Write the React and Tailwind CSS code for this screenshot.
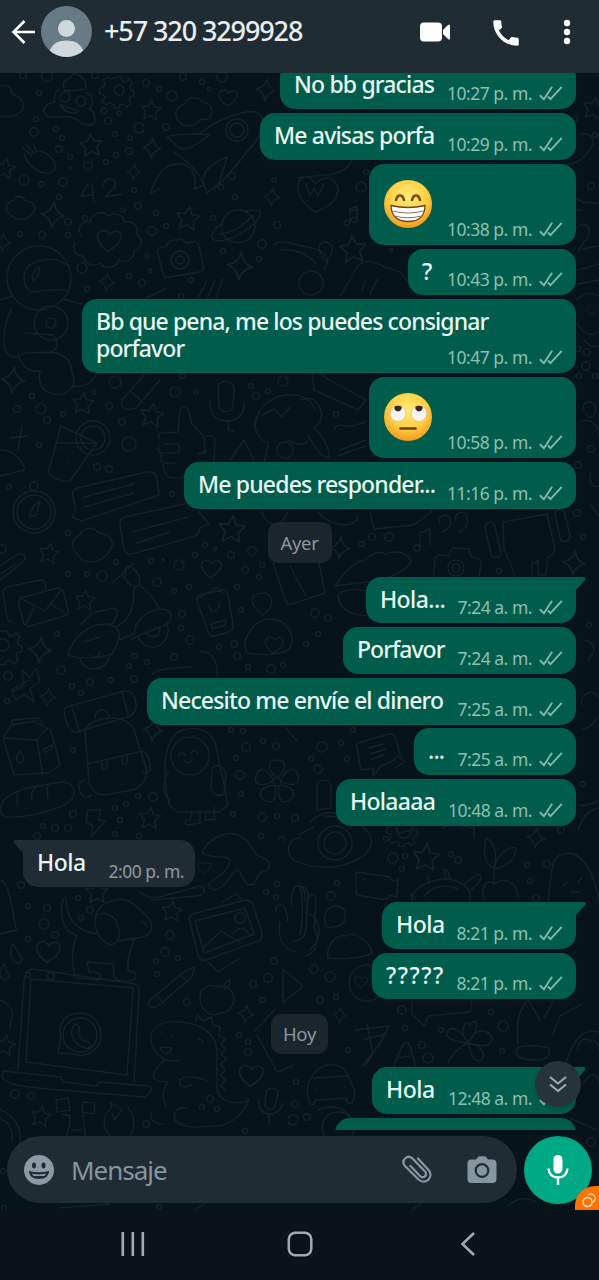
import { MdCall } from "react-icons/md";

const messages = [
  { text: "No bb gracias", time: "10:27 p. m.", box: "-mt-[11px] w-[296px] h-[47px]" },
  { text: "Me avisas porfa", time: "10:29 p. m.", box: "mt-1 w-[316px] h-[47px]" },
  { emoji: "grin", time: "10:38 p. m.", box: "mt-1 w-[207px] h-[81px]" },
  { text: "?", time: "10:43 p. m.", box: "mt-1 w-[168px] h-[46px]" },
  {
    text: "Bb que pena, me los puedes consignar porfavor",
    time: "10:47 p. m.",
    box: "mt-1 w-[494px] h-[74px]",
    spacing: "tracking-[-0.88px]",
    long: true,
  },
  { emoji: "eyes", time: "10:58 p. m.", box: "mt-1 w-[207px] h-[81px]" },
  { text: "Me puedes responder...", time: "11:16 p. m.", box: "mt-1 w-[392px] h-[47px]" },
  { day: "Ayer", box: "mt-[13px] w-[64px] h-[41px]" },
  { text: "Hola...", time: "7:24 a. m.", box: "mt-[14px] w-[210px] h-[46px]", spacing: "tracking-[-0.6px]", tail: true },
  { text: "Porfavor", time: "7:24 a. m.", box: "mt-1 w-[233px] h-[47px]", spacing: "tracking-[-0.95px]" },
  { text: "Necesito me envíe el dinero", time: "7:25 a. m.", box: "mt-1 w-[429px] h-[47px]" },
  { text: "...", time: "7:25 a. m.", box: "mt-[3px] w-[162px] h-[47px]" },
  { text: "Holaaaa", time: "10:48 a. m.", box: "mt-1 w-[240px] h-[47px]", spacing: "tracking-[-0.7px]" },
  {
    text: "Hola",
    time: "2:00 p. m.",
    box: "mt-[14px] w-[172px] h-[47px]",
    spacing: "tracking-[-0.5px]",
    incoming: true,
    tail: true,
  },
  { text: "Hola", time: "8:21 p. m.", box: "mt-[15px] w-[194px] h-[47px]", spacing: "tracking-[-0.5px]", tail: true },
  { text: "?????", time: "8:21 p. m.", box: "mt-1 w-[204px] h-[46px]", spacing: "tracking-[1.5px]" },
  { day: "Hoy", box: "mt-[15px] w-[57px] h-[40px]" },
  { text: "Hola", time: "12:48 a. m.", box: "mt-[13px] w-[204px] h-[47px]", spacing: "tracking-[-0.5px]", tail: true },
  { box: "mt-1 w-[241px] h-[47px]" },
];

// x, y, radius
const dots = [
  [23, 75, 4], [47, 76, 6.5], [95, 75, 4], [39, 93, 3], [146, 83, 4], [159, 89, 3], [183, 77, 4], [202, 82, 3],
  [209, 89, 2], [222, 77, 6], [172, 96, 6], [104, 111, 3.5], [119, 113, 2.5], [108, 121, 4], [139, 128, 6],
  [166, 127, 4], [36, 119, 3], [34, 132, 5], [56, 129, 3], [62, 138, 3], [59, 149, 4], [115, 134, 3],
  [130, 138, 2.5], [129, 151, 4], [116, 155, 3], [106, 162, 3], [70, 157, 3], [88, 166, 5], [70, 168, 1.5],
  [24, 180, 6], [41, 184, 3], [63, 182, 5], [134, 190, 3], [59, 197, 3], [232, 176, 4], [221, 187, 3],
  [235, 197, 3], [274, 180, 2.5], [85, 218, 3], [68, 222, 4], [20, 234, 3], [42, 235, 4], [68, 235, 3],
  [123, 210, 2.5], [138, 206, 4], [156, 213, 3], [166, 226, 3], [152, 231, 5], [213, 218, 3], [277, 225, 4],
  [262, 244, 5], [223, 251, 3], [259, 259, 3], [147, 256, 2.5], [150, 271, 2], [129, 276, 3], [142, 283, 4],
  [82, 268, 6], [87, 289, 3], [191, 280, 3], [181, 296, 3], [115, 382, 7], [32, 396, 3], [17, 409, 4],
  [41, 409, 6], [47, 420, 4], [63, 414, 3], [94, 392, 2.5], [109, 406, 4], [122, 422, 4], [175, 392, 6],
  [196, 392, 2.5], [182, 376, 3], [251, 386, 3], [256, 396, 4], [268, 391, 3], [283, 381, 6], [39, 445, 3],
  [97, 467, 4], [109, 469, 4], [9, 487, 3], [34, 486, 5], [172, 494, 3], [68, 533, 3], [2, 549, 5],
  [68, 574, 3], [87, 574, 3], [102, 576, 6], [116, 562, 3], [151, 561, 3], [163, 560, 1.5], [179, 565, 6],
  [195, 555, 3], [205, 545, 3], [215, 549, 2], [231, 555, 4], [252, 551, 5], [262, 565, 3], [259, 577, 3],
  [245, 570, 4], [157, 582, 5], [174, 591, 3], [189, 587, 3], [237, 587, 3], [182, 614, 4], [181, 628, 3],
  [190, 640, 5], [241, 610, 3], [219, 647, 3], [234, 644, 4], [237, 656, 4], [174, 657, 4], [147, 662, 3],
  [134, 656, 3], [129, 666, 3], [134, 679, 4], [111, 680, 3], [90, 682, 4], [72, 686, 3], [81, 693, 3],
  [61, 670, 5], [57, 634, 3], [8, 676, 5], [7, 701, 3], [248, 667, 3], [271, 669, 5], [283, 665, 3],
  [231, 730, 3], [243, 731, 3], [246, 747, 5], [236, 758, 3], [263, 741, 3], [276, 746, 4], [240, 775, 5],
  [241, 794, 3], [73, 750, 3], [138, 796, 3], [153, 797, 5], [115, 808, 3], [126, 804, 3], [120, 820, 3],
  [73, 814, 4], [43, 826, 3], [68, 828, 4], [233, 814, 3], [262, 817, 5], [277, 816, 3], [295, 818, 4],
  [37, 836, 4], [55, 828, 4], [115, 834, 3], [139, 836, 3], [261, 836, 3], [21, 885, 4], [28, 906, 3],
  [47, 908, 4], [44, 924, 6], [55, 935, 4], [28, 939, 3], [28, 975, 3], [51, 976, 4], [78, 898, 3],
  [90, 910, 4], [81, 918, 3], [170, 935, 5], [165, 952, 5], [156, 961, 3], [178, 958, 3], [157, 974, 3],
  [187, 1002, 4], [266, 892, 3], [277, 884, 3], [276, 897, 3], [274, 961, 4], [253, 984, 4], [268, 978, 5],
  [262, 1000, 3], [239, 1035, 3], [248, 1042, 3], [248, 1052, 4], [296, 1082, 3], [295, 1104, 4],
  [293, 1120, 6], [245, 1131, 3], [15, 1094, 5], [31, 1096, 4], [146, 1124, 4], [202, 1107, 3],
  [210, 1099, 4], [217, 1109, 3], [575, 119, 3], [595, 135, 3], [591, 186, 4], [366, 172, 3], [361, 187, 6],
  [391, 250, 2], [336, 414, 3], [579, 376, 3], [595, 376, 3], [591, 449, 4], [577, 513, 4], [578, 465, 4],
  [578, 349, 3], [587, 352, 4], [586, 366, 5], [372, 537, 4], [389, 537, 5], [362, 544, 3], [499, 571, 3],
  [583, 537, 3], [315, 613, 5], [328, 618, 4], [318, 634, 3], [306, 644, 3], [589, 625, 3], [322, 747, 6],
  [311, 759, 3], [318, 769, 5], [341, 743, 3], [347, 759, 3], [353, 730, 3], [386, 839, 3], [393, 858, 6],
  [405, 856, 3], [402, 869, 3], [451, 854, 3], [458, 860, 4], [527, 865, 3], [547, 864, 4], [530, 881, 3],
  [536, 898, 4], [337, 883, 3], [331, 896, 5], [314, 969, 5], [330, 977, 6], [320, 1000, 4], [336, 997, 3],
  [561, 830, 4], [583, 784, 3], [402, 1010, 5], [491, 1012, 3], [503, 1026, 6], [405, 1028, 3],
  [441, 1030, 3], [422, 1045, 4], [348, 1050, 3], [428, 1058, 6], [502, 1051, 3], [307, 1117, 4],
  [591, 1142, 5], [3, 1171, 3], [4, 1208, 3], [159, 1207, 3],
];

// x, y, scale, rotation
const stars = [
  [151, 110, 1, 5], [91, 145, 1.1, -5], [5, 168, 1, 10], [188, 218, 1.15, 8], [83, 403, 1.05, 5], [152, 415, 1.15, 8],
  [49, 553, 1, 10], [232, 529, 1.3, 5], [85, 600, 1, 5], [150, 818, 1.05, 5], [172, 911, 1, 5], [41, 1116, 1, 10],
  [97, 892, 1.1, 0], [5, 1045, 1, 10], [353, 249, 1.3, -5], [426, 857, 1.3, 5], [594, 108, 1.1, 10],
];

const sparkles = [
  [266, 90, 1.1], [152, 148, 1], [134, 172, 0.8], [272, 197, 0.9], [53, 215, 1.3], [240, 266, 1.4], [107, 282, 0.9],
  [13, 380, 1.3], [40, 650, 1.3], [48, 697, 0.9], [153, 730, 1.1], [246, 1014, 0.9], [574, 563, 1.2], [340, 548, 1.1],
  [536, 838, 1], [340, 1015, 0.8], [3, 242, 0.9],
];

const hearts = [
  [228, 98, 1], [109, 241, 1.3], [211, 569, 1.1], [274, 645, 1], [48, 952, 1.3], [251, 1076, 1.3], [204, 868, 0.7],
  [361, 982, 0.7], [592, 310, 0.6],
];

const doodles = [
  // clouds
  "M178 120c-6-8 1-15 7-16 2-8 14-8 17-2 8 1 12 7 9 13-2 5-7 5-10 4-5 8-17 10-23 1z",
  "M8 213c-4-7 1-12 5-12 2-6 10-6 12 0 9 0 12 7 8 12-4 6-14 11-25 0z",
  "M75 551c-6-9 1-15 5-16 2-8 15-9 18-2 11 0 18 9 12 17-7 13-27 18-35 1z",
  "M0 86c10-2 12 3 12 8 8 2 14 10 10 16-4 7-14 7-22 6",
  // poop
  "M64 88c-3-8 4-6 10-15 8 3 13 8 12 16M60 90c-4 0-7 6-5 12-8 1-14 7-10 12 6 8 22-2 32 6 6 5 18 8 18 0 0-6-2-10-6-11 6-6 4-14-2-16M64 90c6 2 14 0 20-1M60 105c4 6 12 11 19 6-3-2-12-3-19-6z",
  // mitten and rocket
  "M22 147l9 8M26 145l8 8M33 144l4 8M24 154c4 12 15 20 25 19 8-1 7-8 4-13-4-7-12-10-18-8",
  "M168 138c-3-3 12-4 42-4-8 8-20 15-28 15-6-2-8-7-14-11zM200 133c18-14 42-23 55-21 15 5 7 25-10 42-8 12-20 24-31 36M227 157c-12 5-24 12-24 24l4 12 12-10zM174 152c12 8 24 18 30 33l-10 4c5-12-5-27-16-25-16 0-22 14-28 30l10-6",
  // scalloped badge
  "M82 236c-7-7 1-16 8-14 1-9 13-12 18-6 7-5 16-1 16 6 9-2 16 5 12 12 8 4 6 15-2 17 1 8-9 13-15 9-3 9-15 9-19 3-8 5-16 0-16-7-8 1-13-7-9-13",
  // planet
  "M222 226c0-13 13-20 24-14 10 5 12 17 4 26-9 8-24 5-28-6M246 211c12-3 18 0 12 8-9 12-29 22-40 22-12-2-4-13 4-17M219 234c12-1 25-8 34-19",
  // cameras
  "M162 247c-5 1-5 3-4 8l5 18c1 4 3 5 7 4l29-5c4-1 5-4 4-8l-4-18c-1-4-4-5-7-4l-6 1-4-4-13 2-2 5z",
  "M440 555c-4 0-5 3-5 6l-2 18M440 555l9 1 3-8 17 1 2 8 6 1c4 0 4 4 4 6l-2 14",
  // astronaut
  "M12 309c-6 8-10 28-7 40 6 12 12 9 20 4M0 300l13-4M62 299l20 5M18 353c2 14 12 20 24 18M25 333l28 2c6 8 5 14-2 17l-26 1M42 353c22-3 30 8 30 20 5 8 0 18-10 21-16 2-25-8-22-22M72 386c14 2 22-6 24-12",
  "M28 290c-8-12-4-25 10-29 12-3 22-1 29 4M30 292c14-1 24-3 36-2M32 277c1-5 4-8 7-10 2 5-2 10-5 14z",
  // pencil, drink, thumb
  "M122 400l22-25M136 408l24-28M122 400c-4 7 6 12 14 8M130 391l14 12M146 298l20-9M198 298l9-17M207 298l8-17M216 298l7-19",
  "M61 426l36 17-27 38c-8 1-17-3-22-8zM56 443h40M61 450h1M72 452h1M68 462h1M80 448h1",
  "M160 439c-4-3 0-7 4-6l14-1 2-20c0-6 6-8 8-2l4 14 12 13 1 16M160 445c-4 3-1 8 3 8M162 455c-3 4 0 8 4 8M163 465c0 5 3 12 9 13 5 0 12 1 12-3M164 444h12c5 0 5 9 0 9h-11M166 463h10M206 436c5-1 9 0 9 7l-1 18M198 454l8-2",
  // microphones
  "M218 388c0-9 15-9 16 0l-1 18c-1 8-13 7-14 0zM210 402c0 12 6 19 17 19s18-7 17-19M229 421l-1 8 6 3",
  "M266 1094c0-8 12-8 12 0l-3 12c-2 5-10 4-10-2zM259 1100c-1 8 3 14 10 14s13-4 14-11M269 1114v10",
  // chat sheets
  "M73 497c-2-5 1-8 4-9l70-16c6-1 9 2 10 7l2 16-77 26-10-4 4-8zM84 497l50-13M84 507l50-14",
  "M120 525c-1-5 2-7 5-8l64-14c5-1 8 3 10 9l10 12-9 4c0 6-4 8-8 9l-60 17c-5 1-7-2-8-6zM132 532l56-15M136 543l34-11",
  "M0 566l18-12c6-2 9 3 5 8L0 580M0 574l16-10",
  // mail
  "M12 621c-3 1-5-1-5-4L3 593c0-3 2-5 4-6l34-7c4 0 5 5 5 9M20 598l38-10c4 0 5 2 6 6l4 16c1 3-1 5-4 6l-34 10c-4 1-6-2-7-5l-4-16c0-4 0-6 1-7zM20 598l25 13 17-22M26 625l8-18M66 614l-15-10",
  // scooter
  "M112 583l22-20M122 573c4 7 6 13 14 14 6-2 5-14-6-21-5 0-6 4-4 9M139 585c12 8 19 21 21 25M134 588c0 16-2 30-16 38M68 655c5-16 17-30 36-31 14 0 17 8 14 18l-6 12c-12 4-32 6-44 1zM80 625l12-12 22-5c6 3 2 12-4 18M84 642l16-5M118 640l16-6c1-15 14-25 30-25 10 2 9 12 1 16l-34 14",
  "M80 659c4 14 26 14 30-4M90 655c5 4 9 2 10-3M138 636c4 14 26 17 30-4 1-4 0-6-2-9M146 631c2 8 14 8 14-2",
  // passport
  "M197 601c-2-4 1-5 3-6l22-5c4-1 5 1 6 5l5 30c0 4-1 6-5 7l-13 4c-4 1-6-1-7-4zM198 599l19-12 6 6M209 605c0 10 12 8 10-2M211 624l14-4 1 5-14 4z",
  // balloon and cushion
  "M263 615c-14-10-14-21-2-22 14-1 13 15 4 20zM247 653c-7-14 8-34 23-34 16 0 25 15 21 27-2 9-30 10-44 7z",
  // windmill
  "M22 670l8 8 6-10 4 14-10 6 4 14-10-8-8 6-4-8 12-6zM11 690l18-10",
  // suitcase, backpack
  "M64 712c0-4 2-5 6-6l54-15c7-1 11 5 12 12 1 8-3 12-9 14l-50 15c-8 1-11-10-13-20zM72 708l8 24M122 692l6 22M95 718c1-12 14-10 14 0",
  "M85 730c6-14 42-18 49 0l12 38c2 12-6 20-14 22l-28 5c-8 0-14-6-15-14zM87 764l52-12M85 780c-8 0-6 10-4 14 3 4 8 4 10 1M138 752c10-4 12 10 12 18-2 4-5 4-7 2M102 762v7h5v-9M122 757v7h5v-9",
  // milk, bread
  "M3 738l8-13 24-4 16 10 9 34-12 8-34 2zM3 738l34 2 6 36M37 740l10-12M12 725v-5l26-2 4 5M44 749l8-4 1 3-8 5zM20 751c-8 11 2 16 4 8z",
  "M2 804c2-8 16-14 30-17l30-5c16 1 15 16 4 22-16 8-42 14-60 13-6-2-7-8-4-13zM17 804c0-8-1-12 4-14M32 801c-1-7 0-12 4-14M48 798c-1-7-2-12 3-15",
  // bird
  "M170 806c-6-18-10-60 8-74 14-7 34-4 38 14l12 58-8 8-42 0zM168 772c-6 12-6 22 2 28M212 768c6-6 12 0 14 6l-2 20c-6 3-12 0-13-6zM178 756c2-4 6-4 8 0M190 754c2-4 6-4 8 0M184 760c2 4 6 4 8 0M192 812l-2 8c-6-1-6 4-2 5l12-2v-12M206 812l-1 8 10-1-1-12",
  "M152 674c4-5 26-7 40-7M200 652c10-2 18 8 17 24M285 727l12 14",
  // bolt
  "M88 810h13l-3 10 7 1-14 16 2-12-7-2z",
  // dog
  "M66 898c-4-2-6 12-3 24 4 10 8 10 14 14-6 12-6 34 0 42l22 2c4-6-2-9-10-8l-2-10 26 2 1 13c2 5 22 7 22-1 0-5-5-5-8-5v-12l6-20M66 900c1 20 10 30 30 34M96 915c4-14 26-20 36-12l14 12c8 8 8 20-4 22l-24 4M96 916c8-6 20 0 22 10 3 10 0 18-8 19-10-4-18-18-14-29M141 923c4-2 6-1 4 3M133 920h1",
  // photo
  "M190 922c-2-4 0-7 3-8l52-14c4 0 6 1 8 5l9 28c1 5-1 7-4 8l-52 19c-5 1-7-1-8-5zM195 921l50-13 9 26-50 19zM203 948l18-17 20 12M233 934c5-8 12-6 16 0M222 902l14-8 6 5M208 962l10 10 22-14",
  "M149 1001l36-30 10-4-3 10-34 29c-6 4-12-2-9-5zM156 994l8 10M180 975l8 7",
  // apple, play
  "M216 987c-8-4-17 2-16 12 1 12 12 19 20 14 10 0 16-10 13-19-3-7-10-9-17-7zM224 987c0-4 3-7 6-7 1 4-1 7-5 9M283 969v34l20-17z",
  // drops
  "M13 944c-8 16 8 26 9 14zM4 964c-10 14 2 20 5 12z",
  // laptop
  "M18 1069l6-88c1-8 3-11 8-12l98 14c8 1 10 5 9 11l-5 88M26 1062l5-83 102 9-6 87zM3 1071l58 6 2 5 34 4 2-4 50 4c4 1 2 9-5 11l-96-8c-16-2-40-2-46-12z",
  "M61 1037c-4-14 6-24 18-24 13 0 22 10 22 22 0 14-14 24-28 19l-15-1zM73 1027c2-6 6-2 7 3-4 4 2 12 8 12 6 4 0 8-5 5-8-3-14-12-10-20z",
  // dinosaur
  "M180 1060c-14 4-27-6-29-20-2-14 14-20 30-18 20 2 34 10 36 28v38c2 18 26 16 32 12-6 16-22 28-38 26-12 2-30 2-36-6-3-8 4-14 12-12M164 1060c-4 6-16 14-8 20 4 3 10 2 12 2-6 8-6 18-2 24M151 1112c-2 8 4 12 12 12M180 1080c6-6 22-2 28 2M180 1080c-2 8 8 8 12 4M160 1048c4-2 8 0 12 0-2 6-8 8-12 0zM196 1021l1-6 6 6 8-4 2 8 7 2-1 8 6 4-4 5 5 5-5 5 5 5-5 5 4 6-4 5 4 5-4 6 5 5",
  "M162 1033h1M171 1036h1M198 1040c2-2 4 0 5 2",
  // robot, recycle
  "M56 1100l12-2 2 12-13 2zM83 1102l12 1-1 11-12-2zM62 1114l8 2v8l-6 20M83 1114l3 30M72 1130h10M110 1136c-8-8-8-22 2-28l-2-6 12 8-8 10-1-6M128 1108c8 8 8 24-2 32",
  // whale and octopus
  "M202 852c10-18 32-24 44-12 8 8 8 16 18 18 8 4 6 14-2 14-4 0-4 6-8 12-10 4-10-8-16-14-8 2-8 12-18 18-6 4-14 0-10-6 10-6 20-14 20-22-6-6-20 0-28-8zM140 892c10 8 20 6 30 2l30-8c8 2 4 10-4 10l-44 4M278 840c2-6 8-4 6 2M300 838c-16 0-14 22-2 24",
  // hand
  "M276 912c-2-8 8-10 10-2l2 12M292 906c-2-8 0-20 6-20s8 8 7 16M280 922c-2 12 0 26 16 30M300 887c4-2 10 4 8 12l-2 30c-2 10-6 12-14 12M306 924c2-10-2-26 6-30 6 0 4 12 2 34 6 10 4 24-8 28",
  // heart badge, notes, goggles
  "M315 212c-12-8-22-22-15-32 6-6 12-2 15 4 8-8 20-8 23 4 0 14-12 20-23 24zM306 184l4 12 4-8 4 8 6-12M298 178c20-4 42 0 52-14l2-4",
  "M350 223v-14l7-3v14M350 212l7-3M350 222c0 4-6 4-6 1s6-4 6-1M357 219c0 4-6 4-6 1s6-4 6-1",
  "M326 262c-10-12-8-20 0-20 8 2 9 10 0 20zM274 245c4-6 16-2 24 0l18 4c12 4 14 14 8 20M280 250c18-2 30 6 36 14M340 296l18-30c3-4 8-6 14-4l28 10 8 10M362 290l4-10M370 294l8-16",
  // right edge
  "M579 134c14-2 18 8 10 16-6 12-20 16-24 14M582 210h-6c-8-8 0-16 6-8l17 1M576 228c10-10 20 4 8 14l-6 8 20-4M578 270l21-6M578 284l21-4M577 300c8-10 16-6 22-4M577 322c6 14 16 14 22 10",
  "M312 374c6-6 10 0 14 4l40 22-8 10-44-20zM300 400c8-2 14-4 20 8 4 8 0 16-6 20 8 6 18 24 14 30l-8-4-12-18M334 430c4-10 12-2 18-4l14-4M340 450l26-10M338 456l28-10",
  "M584 410c-4-10 12-12 12 0-2 8-8 10-10 4M580 422c10-6 19 4 19 14M591 472c-4 12 4 16 8 14M590 504l9 12M584 340c8 10 15 6 15 6",
  // armchair
  "M485 528c0-6 8-8 10-2l6 26c0 6-8 8-10 2zM503 522l44-8 7 30c2 8-2 12-6 13l-2 18h-8v-14l-6 3v14h-16l-8-20-4-8zM555 514c2-6 8-6 10 0l5 22c0 6-8 8-10 2z",
  "M440 524c-4-8 6-12 10-6 2 8-2 12-8 14M456 520c-2-8 8-10 11-4 2 8-2 14-8 16M370 513l4 16 40-4 18-14M318 512c8 12 36 20 40 4M420 549v-16l10-4v16M420 548c0 4-6 4-6 0s6-4 6 0",
  // lips, phone
  "M335 586c10-16 20-24 30-26 6-6 14-10 20-6 10-4 24-2 26 8-8 12-30 20-45 20zM338 594c12-8 30-4 44 2l-10 20c-20 0-34-6-34-22zM273 563l12 36c2 6 4 6 10 4l30-10-6-30M290 566l16 30M262 511c4 18 20 18 26 0",
  "M357 748c-2-4 0-5 4-6l28-8c4-1 6 2 7 6l4 14M357 748l4 22 12-2v8l8-10 14-6M369 748l14-4M370 754l16-5M372 759l12-4M391 762l8-6 6 6-10 6M317 786c0-8 12-8 14 0v22l-14 2zM310 822c10-8 16-12 28-8",
  // submarine
  "M300 862c10 6 34 8 52 0 22-8 24-24 12-34-8-8-24-12-40-12M300 835c4-4 10-6 14-8",
  "M356 872l34 5c2 8 8 2 8 2l-1 18-8-2c0 4-4 5-8 4l-24-4c-2-6-1-18-1-23zM364 879h1",
  "M412 901c-4-12 28-30 48-18 8 4 12 10 10 18M424 897c6-10 20-14 34-8M414 899l-4-6M430 884l-3-8M446 879l-2-10 4 2 2 8M464 884l14-10c6 2 2 10-10 18",
  "M494 868c-12-4-10-24-8-30 8 4 12 14 8 30zM494 868c4-14 14-22 22-20 0 10-8 20-22 20zM494 868v16M484 900c-4-14 4-22 10-16 10-8 24-2 24 14M548 902l4-34c2-12 10-16 22-14 14 6 22 28 26 52M568 882l-6 4M578 882l4-4M570 892h10M442 828l10-4 22 4v9M395 825l4 8 12-3",
  "M327 928c-6-12 0-22 8-22 12 0 14 14 4 20zM328 958c-2-10 6-24 18-22 10-6 26 8 26 18-12 4-30 6-44 4z",
  "M300 935c4-20 2-40 0-50M310 950c14-14 10-30 0-36",
  // translation sheet, clover
  "M412 1002v12l12 12 4-10 42-4 2-12M355 1030l34-4-6 12-18 28M367 1024l6 30M362 1040l24-6M372 1054l-10 12M394 1066l8-20c2-4 6-4 8 0l6 22M398 1058l12-2",
  "M468 1043c-10-12-2-26 2-18 6-10 12 2-2 18zM468 1043c-20-2-26-8-18-14 4-2 14 4 18 14zM468 1043c8-18 20-12 24-6 2 10-12 10-24 6zM468 1043c16 2 20 16 10 18-6-2-8-10-10-18zM468 1043c-10 4-16 12-20 20",
  "M517 1048c8-4 24-2 32 0 2 8-4 12-12 12-12 0-24-2-20-12zM518 1044c-2-20 0-34 10-44l12 20M552 1036l8-20 22-12M544 1018l10-18",
  "M566 1062c8-24 18-34 33-30M578 1050c0-10 8-14 12-8 6-4 9 4 9 8",
  // car
  "M308 1097c-2-8 0-16 4-20 6-14 28-18 36-2l6 14c2 10-2 16-6 14l-2-5-30 2c-4 8-6 5-8-3zM314 1078l34-2M315 1089h1M344 1088h1",
  "M255 1031l20-22M257 1035l20 37 16-6M318 1110c14-6 32-4 36 16M577 1090l12-14c8-4 10 4 10 8M570 1118l26 12M584 640c12 2 12 12 4 20",
  "M0 1110c12 4 22 16 20 32M0 1118c8 4 14 12 12 22M60 1208l50-4M195 1210l12-8M412 1210l16-12M508 1206c10-10 22-8 28-4M0 1000c8 4 14 8 12 16l-2 12M0 880c12 2 14 50 17 50l-17 4M582 705c-4-10 12-18 16-8M583 728c2 4 8-2 14-10M579 805c8 2 18-4 20-4M578 830c4-14 12-20 20-22",
  // fruit face
  "M255 425c2-20 20-32 40-30 10 0 18 8 20 14M257 418c-6 10 4 26 12 24M262 415l12-6 8 8 8-10M288 440c8 6 16 4 20 2M230 460l14-20 10 20M268 445l-4 18M0 450c14-2 26 16 24 20L0 476M10 438l18-2M22 426l-4 24",
  "M88 184l-7 12 12-1M92 184l2 18M103 186c2-12 16-8 12 1l-10 10 17-3M34 505l-5 12 7-2 4-13z",
];

const rings = [
  [119, 90, 5], [237, 130, 11], [237, 130, 7], [39, 278, 32], [51, 323, 17], [51, 323, 5], [180, 260, 9], [180, 260, 4],
  [93, 438, 17], [93, 438, 12], [129, 444, 7], [34, 512, 21], [34, 512, 17], [3, 645, 6], [190, 756, 19], [65, 97, 5],
  [81, 101, 5], [80, 1035, 17], [240, 918, 5], [335, 843, 17], [335, 843, 11], [456, 568, 8], [456, 568, 4],
  [277, 782, 4], [367, 983, 18], [285, 450, 8], [338, 1128, 16], [404, 830, 8], [311, 283, 12],
];

const gears = [
  [119, 90, 1],
  [5, 645, 1.1],
  [404, 830, 0.9],
];

const Wallpaper = () => (
  <svg
    className="absolute inset-x-0 top-0 h-[1211px] w-[599px]"
    viewBox="0 0 599 1211"
    fill="none"
    stroke="#14212a"
    strokeWidth="1.4"
    strokeLinecap="round"
    strokeLinejoin="round"
  >
    {dots.map(([x, y, r], i) => (
      <circle key={i} cx={x} cy={y} r={r * 0.85} />
    ))}
    {rings.map(([x, y, r], i) => (
      <circle key={i} cx={x} cy={y} r={r} />
    ))}
    {stars.map(([x, y, s, a], i) => (
      <path
        key={i}
        transform={`translate(${x} ${y}) rotate(${a}) scale(${s})`}
        d="M0-10L3-3.5 10-3 5 2.5 6.5 9.5 0 6-6.5 9.5-5 2.5-10-3-3-3.5z"
      />
    ))}
    {sparkles.map(([x, y, s], i) => (
      <path
        key={i}
        transform={`translate(${x} ${y}) rotate(6) scale(${s})`}
        d="M0-10Q1.5-2 9 0 1.5 2 0 10-1.5 2-9 0-1.5-2 0-10z"
      />
    ))}
    {hearts.map(([x, y, s], i) => (
      <path
        key={i}
        transform={`translate(${x} ${y}) rotate(6) scale(${s})`}
        d="M0 8C-7 4-10-1-9-4c2-5 7-4 9-1 3-4 8-4 9 0 0 4-3 9-9 13z"
      />
    ))}
    {gears.map(([x, y, s], i) => (
      <path
        key={i}
        transform={`translate(${x} ${y}) scale(${s})`}
        d="M-3-13h5l1 4 4 1 3-3 4 4-3 3 1 4 3 1v5l-4 1-1 3 2 4-4 3-3-3-4 1-1 3h-5l-1-4-4-1-3 2-4-4 3-3-2-4-4-1 1-5 4-1 1-4-2-3 4-3 3 2 3-1z"
      />
    ))}
    {[0, 72, 144, 216, 288].map((a) => (
      <path key={a} transform={`translate(277 782) rotate(${a})`} d="M0-4C-10-12-10-22 0-22S10-12 0-4z" />
    ))}
    {doodles.map((d, i) => (
      <path key={i} d={d} />
    ))}
  </svg>
);

const Ticks = () => (
  <svg className="h-4 w-6 shrink-0" viewBox="0 0 24 16" fill="none" stroke="#84b6ac" strokeWidth="1.9">
    <path d="M0.800 10.200L4.900 14.200 13.100 1.800M8.900 11.500L11.500 14.200 22.800 1.800" />
  </svg>
);

const Grin = () => (
  <svg className="absolute left-[15px] top-4 size-12" viewBox="0 0 48 48">
    <defs>
      <radialGradient id="face" cx="50%" cy="36%" r="64%">
        <stop offset="0" stopColor="#ffec78" />
        <stop offset="0.6" stopColor="#ffd044" />
        <stop offset="1" stopColor="#f39a20" />
      </radialGradient>
    </defs>
    <circle cx="24" cy="24" r="24" fill="url(#face)" />
    <path
      d="M12 20c1.500-6 6.500-6 8 0M28 20c1.500-6 6.500-6 8 0"
      fill="none"
      stroke="#7a4c14"
      strokeWidth="2.600"
      strokeLinecap="round"
    />
    <path d="M7 25.500q17 4 34 0c0 10-6 16-17 16S7 35.500 7 25.500z" fill="#fff" stroke="#6b4116" strokeWidth="1.300" />
    <path d="M8 31q16 4 32 0M10.500 36q13.500 3.500 27 0" fill="none" stroke="#80603c" strokeWidth="0.900" />
  </svg>
);

const RollingEyes = () => (
  <svg className="absolute left-[15px] top-4 size-12" viewBox="0 0 48 48">
    <circle cx="24" cy="24" r="24" fill="url(#face)" />
    <circle cx="14" cy="20.500" r="8" fill="#f7f4ef" stroke="#e2b670" strokeWidth="0.700" />
    <circle cx="35" cy="20.500" r="8" fill="#f7f4ef" stroke="#e2b670" strokeWidth="0.700" />
    <path d="M10.500 13.500a8 8 0 0 1 7 0 3.700 3.700 0 1 1-7 0zM31.500 13.500a8 8 0 0 1 7 0 3.700 3.700 0 1 1-7 0z" fill="#3b2412" />
    <path d="M16.500 35.500h15" stroke="#6b4116" strokeWidth="2.600" strokeLinecap="round" />
  </svg>
);

const DayChip = ({ day, box }) => (
  <div
    className={`${box} flex shrink-0 items-center justify-center self-center rounded-[10px] bg-[#1a252d] text-[18.5px] tracking-[-0.3px] text-[#8b979e]`}
  >
    {day}
  </div>
);

const Bubble = ({ text, emoji, time, box, long, incoming, tail, spacing = "tracking-[-0.83px]" }) => (
  <div
    className={`${box} relative flex shrink-0 rounded-[15px] pl-[14px] ${
      incoming
        ? "ml-[23px] self-start rounded-tl-none bg-[#202c33] pr-[11px]"
        : "mr-[23px] self-end bg-[#005d4b] pr-[13px]"
    } ${tail && !incoming ? "rounded-tr-none" : ""}`}
  >
    {tail && (
      <svg
        className={`absolute top-0 h-[15px] w-[12px] ${incoming ? "-left-[10px] -scale-x-100" : "-right-[10px]"}`}
        viewBox="0 0 12 15"
        fill={incoming ? "#202c33" : "#005d4b"}
      >
        <path d="M0 0h10q3 .5 1 3L2 13v2H0z" />
      </svg>
    )}
    {emoji === "grin" && <Grin />}
    {emoji === "eyes" && <RollingEyes />}
    {text && (
      <p
        className={`${spacing} pt-[9px] text-[23px] font-medium leading-[27px] text-[#e9f5f3] ${
          long ? "-mr-[90px] w-[420px] shrink-0" : "whitespace-nowrap"
        }`}
      >
        {text}
      </p>
    )}
    {time && (
      <div
        className={`ml-auto flex items-end gap-[7px] self-end whitespace-nowrap pb-[8px] text-[17.5px] leading-5 tracking-[-0.48px] ${
          incoming ? "text-[#8e9ba2]" : "text-[#8fbfb5]"
        }`}
      >
        <span className="-mb-[2px]">{time}</span>
        {!incoming && <Ticks />}
      </div>
    )}
  </div>
);

const Header = () => (
  <header className="relative z-10 flex h-[73px] shrink-0 bg-[#202c33] text-white">
    <svg className="ml-[11px] mt-5 h-6 w-[26px]" viewBox="0 0 26 24" fill="none" stroke="currentColor" strokeWidth="2.600">
      <path d="M13.500 1L2.500 12l11 11M2.500 12H24" />
    </svg>
    <svg className="ml-1 mt-[6px] size-[51px]" viewBox="0 0 51 51">
      <defs>
        <clipPath id="avatar">
          <circle cx="25.500" cy="25.500" r="25.500" />
        </clipPath>
      </defs>
      <g clipPath="url(#avatar)">
        <path fill="#677b86" d="M0 0h51v51H0z" />
        <circle cx="25.500" cy="22.500" r="8.500" fill="#cfd8dd" />
        <path d="M8 47c2-8 8-12.500 17.500-12.500S41 39 43 47l-9 6H17z" fill="#cfd8dd" />
      </g>
    </svg>
    <h1 className="ml-3 mt-[14px] w-[316px] whitespace-nowrap text-[27px] font-medium leading-[34px] tracking-[-1.1px] text-[#e9edef]">
      +57 320 3299928
    </h1>
    <svg className="mt-[22px] h-5 w-[30px]" viewBox="0 0 30 20" fill="currentColor">
      <rect y="0.500" width="22" height="19" rx="4" />
      <path d="M23 8l5-5q2-1.500 2 1v12q0 2.500-2 1l-5-5z" />
    </svg>
    <MdCall className="ml-[39px] mt-4 size-[34px]" />
    <svg className="ml-10 mt-[19px] h-[26px] w-2" viewBox="0 0 8 26" fill="currentColor">
      <circle cx="4" cy="4" r="3.200" />
      <circle cx="4" cy="13" r="3.200" />
      <circle cx="4" cy="22" r="3.200" />
    </svg>
  </header>
);

const Composer = () => (
  <div className="relative mt-[6px] flex h-[67px] shrink-0 pl-[7px]">
    <div className="flex w-[510px] items-center rounded-full bg-[#202c33] text-[#8696a0]">
      <svg className="ml-[17px] size-[30px]" viewBox="0 0 30 30">
        <circle cx="15" cy="15" r="15" fill="#8b9aa4" />
        <g fill="#202c33">
          <ellipse cx="10" cy="10.500" rx="2" ry="3" />
          <ellipse cx="19.500" cy="10.500" rx="2" ry="3" />
          <path d="M5 16q10 2.500 20 0c0 5-4 8-10 8s-10-3-10-8z" />
        </g>
        <path d="M8 18.800q7 1.200 14 0-.5 1.800-2 2.200H10q-1.500-.4-2-2.200z" fill="#8b9aa4" />
      </svg>
      <span className="ml-[17px] mt-[2px] w-[331px] text-[26px] tracking-[-1px]">Mensaje</span>
      <svg
        className="size-[30px]"
        viewBox="0 0 30 30"
        fill="none"
        stroke="currentColor"
        strokeWidth="2.300"
        strokeLinecap="round"
      >
        <path d="M16 3.500L27 15.500c5 7-4 15-10.500 9L2.500 10.500C-1 5 5.500-1 10.500 3.500L23 16.500c3 4-1.500 7.500-5 4.500L8.500 11" />
      </svg>
      <svg className="ml-[35px] size-[30px]" viewBox="0 0 30 30">
        <path
          fill="#8696a0"
          d="M9 4.500L11 2q.7-.8 2-.8h4q1.300 0 2 .8l2 2.500h4.500q4 0 4 4V24q0 4-4 4h-21q-4 0-4-4V8.500q0-4 4-4z"
        />
        <circle cx="15" cy="15.500" r="6.300" fill="none" stroke="#202c33" strokeWidth="2.200" />
      </svg>
    </div>
    <button type="button" className="ml-[7px] flex size-[68px] items-center justify-center rounded-full bg-[#00a985]">
      <svg className="h-[30px] w-[22px]" viewBox="0 0 22 30" fill="none" stroke="#fff" strokeWidth="2.400">
        <rect x="6.500" y="0" width="9" height="18.500" rx="4.500" fill="#fff" stroke="none" />
        <path d="M1.500 13.500C2 19 5.500 22.500 11 22.500s9-3.500 9.500-9M11 22v8" />
      </svg>
    </button>
    <div className="absolute right-0 top-[50px] flex h-6 w-6 items-center justify-center rounded-tl-[20px] bg-[#ff7200]">
      <svg className="ml-1 mt-1 size-[15px]" viewBox="0 0 15 15" fill="none" stroke="#ffe3c4" strokeWidth="1.500">
        <circle cx="5.500" cy="9" r="4.500" />
        <path d="M5.500 2.200a4.500 4.500 0 1 1 5.500 7" strokeWidth="1.200" />
      </svg>
    </div>
  </div>
);

const NavBar = () => (
  <nav className="relative mt-[7px] flex h-[70px] shrink-0 items-center bg-[#0b131a] pb-[3px] text-[#a4a9ad]">
    <svg className="ml-[121px] h-6 w-6" viewBox="0 0 24 24" fill="none" stroke="currentColor" strokeWidth="2.600">
      <path d="M1.800 0v24M11.800 0v24M21.800 0v24" />
    </svg>
    <svg className="ml-[142px] size-[26px]" viewBox="0 0 26 26" fill="none" stroke="currentColor" strokeWidth="2.500">
      <rect x="1.800" y="1.800" width="22.500" height="22.500" rx="6.500" />
    </svg>
    <svg className="ml-[147px] h-6 w-4" viewBox="0 0 16 24" fill="none" stroke="currentColor" strokeWidth="2.600">
      <path d="M14 1L2.500 12 14 23" />
    </svg>
  </nav>
);

export default function App() {
  return (
    <div className="relative flex h-[1280px] w-[599px] flex-col overflow-hidden bg-[#07131a] font-['Noto_Sans',sans-serif]">
      <Wallpaper />
      <Header />
      <main className="relative flex h-[1057px] shrink-0 flex-col overflow-hidden">
        {messages.map((m, i) => (m.day ? <DayChip key={i} {...m} /> : <Bubble key={i} {...m} />))}
        <button
          type="button"
          className="absolute right-[18px] top-[988px] flex size-[46px] items-center justify-center rounded-full bg-[#27333b] shadow-md"
        >
          <svg className="size-[18px]" viewBox="0 0 18 18" fill="none" stroke="#a2acb2" strokeWidth="2">
            <path d="M1 2l8 6.500L17 2M1 9.500L9 16l8-6.500" />
          </svg>
        </button>
      </main>
      <Composer />
      <NavBar />
    </div>
  );
}
